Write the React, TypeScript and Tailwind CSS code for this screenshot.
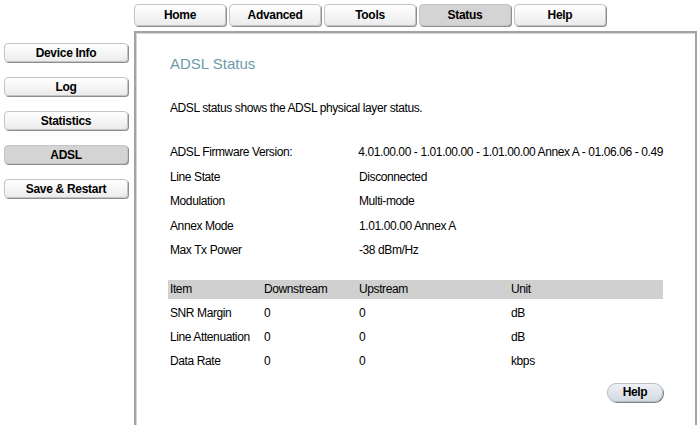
const tabs = ["Home", "Advanced", "Tools", "Status", "Help"];
const sideItems = ["Device Info", "Log", "Statistics", "ADSL", "Save & Restart"];

const info = [
  ["ADSL Firmware Version:", "4.01.00.00 - 1.01.00.00 - 1.01.00.00 Annex A - 01.06.06 - 0.49"],
  ["Line State", "Disconnected"],
  ["Modulation", "Multi-mode"],
  ["Annex Mode", "1.01.00.00 Annex A"],
  ["Max Tx Power", "-38 dBm/Hz"],
];

const stats = [
  ["SNR Margin", "0", "0", "dB"],
  ["Line Attenuation", "0", "0", "dB"],
  ["Data Rate", "0", "0", "kbps"],
];

function NavButton({ label, active, className }: { label: string; active?: boolean; className: string }) {
  return (
    <div
      className={`flex items-center justify-center rounded-[4px] border border-[#c4c4c4] text-[12px] font-bold tracking-[-0.3px] text-black shadow-[1px_1px_0_#8e8e8e] ${
        active ? "bg-[#d4d4d4]" : "bg-gradient-to-b from-white to-[#ececec]"
      } ${className}`}
    >
      {label}
    </div>
  );
}

export default function App() {
  return (
    <div className="h-[425px] w-[700px] overflow-hidden bg-white font-['Liberation_Sans',Arial,sans-serif] text-[12px] tracking-[-0.4px] text-black">
      <div className="flex gap-[3px] pl-[134px] pt-[4px]">
        {tabs.map((t) => (
          <NavButton key={t} label={t} active={t === "Status"} className="h-[22px] w-[92px]" />
        ))}
      </div>

      <div className="mt-[5px] flex">
        <div className="flex w-[134px] flex-col gap-[15px] pl-[4px] pt-[12px]">
          {sideItems.map((s) => (
            <NavButton key={s} label={s} active={s === "ADSL"} className="h-[19px] w-[124px]" />
          ))}
        </div>

        <div className="h-[420px] w-[563px] border-2 border-b-0 border-[#a3a3a3] pl-[32px] pr-[32px] shadow-[inset_1px_1px_0_#d6d6d6]">
          <div className="mt-[22px] flex h-[18px] items-center pl-[2px] text-[15px] tracking-normal text-[#6f9aa9]">
            ADSL Status
          </div>
          <div className="mt-[26px] flex h-[18px] items-center pl-[2px]">
            ADSL status shows the ADSL physical layer status.
          </div>

          <div className="mt-[23px] flex flex-col pl-[2px]">
            {info.map(([k, v]) => (
              <div key={k} className="flex h-[24.5px] items-center">
                <div className="w-[189px]">{k}</div>
                <div className="whitespace-nowrap">{v}</div>
              </div>
            ))}
          </div>

          <div className="mt-[17px] flex h-[19px] w-[495px] items-center bg-[#d0d0d0] pl-[2px]">
            <div className="w-[94px]">Item</div>
            <div className="w-[95px]">Downstream</div>
            <div className="w-[152px]">Upstream</div>
            <div>Unit</div>
          </div>
          <div className="mt-[2px] flex flex-col">
            {stats.map(([a, b, c, d]) => (
              <div key={a} className="flex h-[24px] items-center pl-[2px]">
                <div className="w-[94px] whitespace-nowrap">{a}</div>
                <div className="w-[95px]">{b}</div>
                <div className="w-[152px]">{c}</div>
                <div>{d}</div>
              </div>
            ))}
          </div>

          <div className="mt-[10px] flex w-[495px] justify-end">
            <div className="flex h-[19px] w-[56px] items-center justify-center rounded-[9px] border border-[#b8bec6] bg-gradient-to-b from-[#eef1f5] to-[#d3d9e1] text-[12px] font-bold shadow-[1px_1px_0_#7d838b]">
              Help
            </div>
          </div>
        </div>
      </div>
    </div>
  );
}
